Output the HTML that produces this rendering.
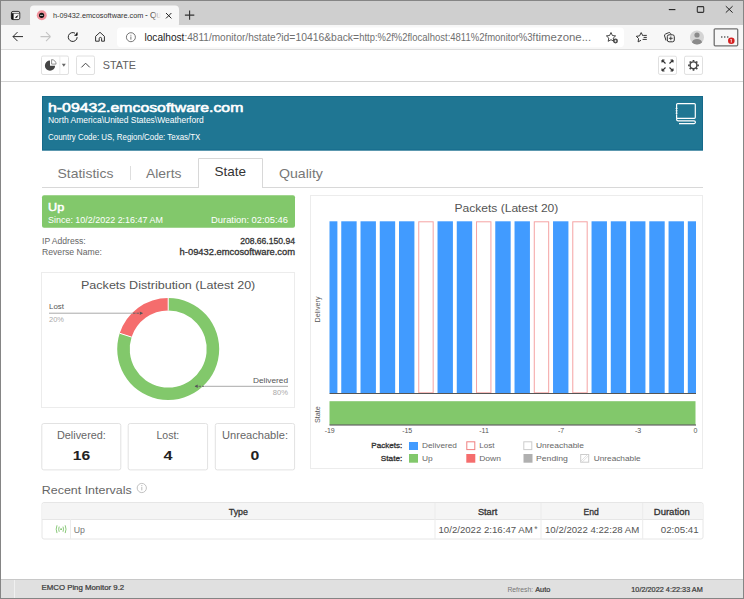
<!DOCTYPE html>
<html><head><meta charset="utf-8">
<style>
html,body{margin:0;padding:0;width:744px;height:599px;overflow:hidden;background:#fff;}
svg{display:block;position:absolute;left:0;top:0;}
text{font-family:"Liberation Sans",sans-serif;}
</style></head>
<body>
<svg width="744" height="599" viewBox="0 0 744 599">
<!-- ===== browser tab strip ===== -->
<rect x="0" y="0" width="744" height="26" fill="#cfcfcf"/>
<rect x="30" y="5.6" width="149" height="22" rx="4" fill="#f7f7f7"/>
<!-- toolbar -->
<rect x="0" y="25" width="744" height="24.5" fill="#f7f7f7"/>
<rect x="0" y="49" width="744" height="1" fill="#dcdcdc"/>
<!-- sidebar icon -->
<rect x="11.4" y="11.4" width="8.4" height="8.2" rx="1.6" fill="#f4f4f4" stroke="#222" stroke-width="0.9"/>
<rect x="11.5" y="12.9" width="8.2" height="0.7" fill="#333"/>
<rect x="11.4" y="13.4" width="2.2" height="6" fill="#111"/>
<path d="M15.6 17.6 L16.6 16.2 L17.4 17 Z M16.5 16.8 L18.3 15.3" stroke="#222" stroke-width="0.9" fill="#222"/>
<!-- favicon -->
<circle cx="41.75" cy="15.2" r="5" fill="#f2929c"/>
<circle cx="41.6" cy="15.35" r="2.6" fill="#111"/>
<rect x="40" y="14.85" width="3.1" height="0.9" fill="#ddd"/>
<!-- tab title -->
<text transform="translate(53.00,18.00) scale(0.905,1)" font-size="8.1" fill="#333">h-09432.emcosoftware.com</text><text x="145" y="18" font-size="8.3" fill="#333">- Qu</text>
<rect x="150" y="9" width="11" height="12" fill="url(#fadeTab)"/><rect x="161" y="9" width="4" height="12" fill="#f7f7f7"/>
<defs>
<linearGradient id="fadeTab" x1="0" x2="1"><stop offset="0" stop-color="#f7f7f7" stop-opacity="0"/><stop offset="1" stop-color="#f7f7f7" stop-opacity="1"/></linearGradient>
</defs>
<path d="M166 13 l5.4 5.4 M171.4 13 l-5.4 5.4" stroke="#222" stroke-width="1"/>
<path d="M189.6 10.4 v9.4 M184.9 15.1 h9.4" stroke="#333" stroke-width="1.1"/>
<!-- window controls -->
<path d="M668.8 9.6 h6.6" stroke="#222" stroke-width="1.1"/>
<rect x="697.3" y="6.6" width="6.4" height="5.8" rx="0.8" fill="none" stroke="#333" stroke-width="1.1"/>
<path d="M725.8 6.2 l6.8 6.4 M732.6 6.2 l-6.8 6.4" stroke="#222" stroke-width="1"/>

<!-- toolbar icons -->
<path d="M13 36.6 h10 M13 36.6 l4.5 -4.5 M13 36.6 l4.5 4.5" stroke="#2a2a2a" stroke-width="1" fill="none"/>
<path d="M50.5 36.6 h-10 M50.5 36.6 l-4.5 -4.5 M50.5 36.6 l-4.5 4.5" stroke="#c4c4c4" stroke-width="1.1" fill="none"/>
<path d="M77.15 37.1 A4.45 4.45 0 1 1 75 33.2" stroke="#2a2a2a" stroke-width="1" fill="none"/>
<path d="M77 32.4 V35.3 H74.3" stroke="#2a2a2a" stroke-width="0.9" fill="none"/><path d="M77.3 32.3 L77.3 35.4 L74.8 35.4 Z" fill="#111"/>
<path d="M95.6 41.2 V36.3 L100 32.3 L104.4 36.3 V41.2 H101.6 V38.6 a1.2 1.2 0 0 0 -2.4 0 V41.2 Z" stroke="#333" stroke-width="1" fill="none" stroke-linejoin="round"/>
<!-- address bar -->
<rect x="117" y="27.5" width="507" height="19.7" rx="4" fill="#fff"/>
<circle cx="130.9" cy="37.2" r="4.5" fill="none" stroke="#666" stroke-width="0.9"/>
<rect x="130.45" y="36.5" width="0.9" height="3.1" fill="#666"/>
<rect x="130.45" y="34.8" width="0.9" height="0.9" fill="#666"/>
<text transform="translate(144.50,41.30) scale(0.954,1)" font-size="10.6" fill="#1a1a1a">localhost</text><text transform="translate(184.40,41.30) scale(0.953,1)" font-size="10.6" fill="#707070">:4811/monitor/hstate?</text><text transform="translate(281.30,41.30) scale(0.979,1)" font-size="10.6" fill="#707070">id=10416&amp;back=</text><text transform="translate(359.20,41.30) scale(0.891,1)" font-size="10.6" fill="#707070">http:%2f%2f</text><text transform="translate(410.10,41.30) scale(0.899,1)" font-size="10.6" fill="#707070">localhost:4811%2fmonitor%3f</text><text transform="translate(535.40,41.30) scale(1.077,1)" font-size="10.6" fill="#707070">timezone...</text>
<!-- star add -->
<path d="M611 32.5 l1.4 3 3.2 .4 -2.4 2.2 .6 3.2 -2.8 -1.6 -2.8 1.6 .6 -3.2 -2.4 -2.2 3.2 -.4z" fill="none" stroke="#333" stroke-width="0.9" stroke-linejoin="round"/>
<circle cx="615.5" cy="41" r="2.4" fill="#444"/>
<path d="M615.5 39.8 v2.4 M614.3 41 h2.4" stroke="#fff" stroke-width="0.7"/>
<!-- favorites -->
<path d="M642.9 35.9 L641.2 32.6 L639.5 35.9 L636.3 36.3 L638.6 38.6 L638.1 41.9 L641 40.3" fill="none" stroke="#333" stroke-width="1" stroke-linejoin="round"/>
<path d="M643.2 35.4 h3.6 M643.6 37.4 h3.2 M642.6 39.4 h4.2" stroke="#333" stroke-width="1"/>
<!-- collections -->
<path d="M666 40.5 L664.6 36 a1.6 1.6 0 0 1 1 -2 l3 -1.3 a1.6 1.6 0 0 1 2 .8 l0.5 1" fill="none" stroke="#333" stroke-width="1"/>
<rect x="667.3" y="34.8" width="7" height="7" rx="1.8" fill="#f7f7f7" stroke="#333" stroke-width="1"/>
<path d="M670.8 36.4 v3.8 M668.9 38.3 h3.8" stroke="#333" stroke-width="0.9"/>
<!-- profile -->
<circle cx="697" cy="37.5" r="7" fill="#d4d4d4"/>
<circle cx="697" cy="35" r="2.6" fill="#8a8a8a"/>
<path d="M692 42.5 a5 3.6 0 0 1 10 0 a7 7 0 0 1 -10 0z" fill="#8a8a8a"/>
<!-- menu -->
<rect x="714.2" y="28.8" width="23.5" height="17" rx="1" fill="none" stroke="#707070" stroke-width="1.3"/>
<circle cx="721.8" cy="37" r="0.7" fill="#222"/><circle cx="724.8" cy="37" r="0.7" fill="#222"/><circle cx="727.8" cy="37" r="0.7" fill="#222"/>
<circle cx="731.3" cy="40.8" r="3.3" fill="#d42020"/>
<path d="M731.3 39.2 v3.4 M730.4 40 l0.9 -0.9" stroke="#fff" stroke-width="0.8"/>

<!-- ===== app toolbar ===== -->
<rect x="0" y="81" width="744" height="1" fill="#d4d4d4"/>
<rect x="41.5" y="56" width="27" height="18.5" rx="1.5" fill="#fff" stroke="#e0e0e0" stroke-width="1"/>
<rect x="59.5" y="56" width="0.8" height="18.5" fill="#e6e6e6"/>
<path d="M50 60.6 A5.1 5.1 0 1 0 55.1 65.7 H50 Z" fill="#444"/>
<path d="M51.6 59.6 v4.5 h4.5 a4.5 4.5 0 0 0 -4.5 -4.5z" fill="none" stroke="#666" stroke-width="0.7"/>
<path d="M61.8 63.8 h4 l-2 3z" fill="#666"/>
<rect x="76.5" y="56" width="18" height="18.5" rx="1.5" fill="#fff" stroke="#e0e0e0" stroke-width="1"/>
<path d="M81.4 67.4 l4.2 -4.2 l4.2 4.2" fill="none" stroke="#444" stroke-width="1"/>
<text transform="translate(102.80,69.20) scale(0.931,1)" font-size="11.6" fill="#606060">STATE</text>
<rect x="658.5" y="56.2" width="18" height="18.2" rx="1.5" fill="#fff" stroke="#e0e0e0" stroke-width="1"/>
<g stroke="#333" stroke-width="1.1" fill="none">
<path d="M662 60 l3.5 3.5 M662 60 h2.5 M662 60 v2.5"/>
<path d="M673 60 l-3.5 3.5 M673 60 h-2.5 M673 60 v2.5"/>
<path d="M662 71 l3.5 -3.5 M662 71 h2.5 M662 71 v-2.5"/>
<path d="M673 71 l-3.5 -3.5 M673 71 h-2.5 M673 71 v-2.5"/>
</g>
<rect x="684.5" y="56.2" width="18" height="18.2" rx="1.5" fill="#fff" stroke="#e0e0e0" stroke-width="1"/>
<g transform="translate(693.5,65.3)">
<circle r="3.4" fill="none" stroke="#444" stroke-width="1.4"/>
<g stroke="#444" stroke-width="1.7">
<path d="M0 -5.4 v1.6 M0 5.4 v-1.6 M-5.4 0 h1.6 M5.4 0 h-1.6 M-3.8 -3.8 l1.1 1.1 M3.8 3.8 l-1.1 -1.1 M-3.8 3.8 l1.1 -1.1 M3.8 -3.8 l-1.1 1.1"/>
</g>
</g>

<!-- ===== header ===== -->
<rect x="42" y="96" width="661" height="54.4" fill="#1f7693"/>
<rect x="42.5" y="96.5" width="660" height="53.5" fill="none" stroke="#15698a" stroke-width="1"/>
<text transform="translate(48.00,112.40) scale(1.165,1)" font-size="13.6" fill="#fff" stroke="#fff" stroke-width="0.6">h-09432.emcosoftware.com</text>
<text transform="translate(48.00,123.20) scale(1.023,1)" font-size="8.3" fill="#fff">North America\United States\Weatherford</text>
<text transform="translate(48.00,139.70) scale(0.957,1)" font-size="8.3" fill="#fff">Country Code: US, Region/Code: Texas/TX</text>
<g stroke="#fff" stroke-width="1.2" fill="none">
<path d="M676.6 118.3 V104.6 a1 1 0 0 1 1 -1 H694.3 a1 1 0 0 1 1 1 V117.3 a1 1 0 0 1 -1 1 H676.6"/>
<path d="M676.6 118.3 V119.2 a1.6 1.6 0 0 0 1.6 1.6 H694 a1.4 1.4 0 0 1 0 2.8 H679"/>
</g>
<rect x="675.3" y="108" width="2.6" height="6.6" fill="#1f7592"/>
<path d="M675.6 108.4 h2 M675.6 110.8 h2 M675.6 113.2 h2" stroke="#fff" stroke-width="0.9"/>
<path d="M676.6 108 v6.6" stroke="#fff" stroke-width="1"/>
<!-- ===== tabs ===== -->
<rect x="42" y="187" width="661" height="1" fill="#d8d8d8"/>
<path d="M198.5 188 V158.5 H262.5 V188" fill="#fff" stroke="#d8d8d8" stroke-width="1"/>
<rect x="199" y="186.5" width="63" height="2" fill="#fff"/>
<rect x="130" y="166" width="1" height="14" fill="#dedede"/>
<text transform="translate(57.50,178.00) scale(1.075,1)" font-size="13" fill="#777">Statistics</text>
<text transform="translate(146.00,178.00) scale(1.071,1)" font-size="13" fill="#777">Alerts</text>
<text transform="translate(214.40,176.20) scale(1.041,1)" font-size="13" fill="#333">State</text>
<text transform="translate(279.00,178.00) scale(1.087,1)" font-size="13" fill="#777">Quality</text>

<!-- ===== green status ===== -->
<rect x="42" y="195.3" width="253" height="32.5" rx="2" fill="#82c86b"/>
<text transform="translate(48.00,210.90) scale(1.112,1)" font-size="11.4" fill="#fff" stroke="#fff" stroke-width="0.5">Up</text>
<text transform="translate(48.00,222.90) scale(0.985,1)" font-size="9.1" fill="#fff">Since: 10/2/2022 2:16:47 AM</text>
<text transform="translate(288.00,222.90) scale(1.029,1)" font-size="9.1" fill="#fff" text-anchor="end">Duration: 02:05:46</text>
<text transform="translate(42.00,244.20) scale(0.955,1)" font-size="9" fill="#666">IP Address:</text>
<text transform="translate(42.00,255.00) scale(0.960,1)" font-size="9" fill="#666">Reverse Name:</text>
<text transform="translate(295.00,244.20) scale(0.955,1)" font-size="9" fill="#333" stroke="#333" stroke-width="0.3" text-anchor="end">208.66.150.94</text>
<text transform="translate(295.00,255.00) scale(1.040,1)" font-size="9" fill="#333" stroke="#333" stroke-width="0.3" text-anchor="end">h-09432.emcosoftware.com</text>

<!-- ===== pie panel ===== -->
<rect x="41.5" y="272.5" width="253" height="135" fill="#fff" stroke="#ececec" stroke-width="1"/>
<text transform="translate(81.00,288.80) scale(1.082,1)" font-size="11.6" fill="#555">Packets Distribution (Latest 20)</text>
<g transform="translate(168.2,349)">
<path d="M0 -51 A51 51 0 1 1 -48.5 -15.76 L-36.6 -11.9 A38.5 38.5 0 1 0 0 -38.5 Z" fill="#82c86b"/>
<path d="M0 -51 A51 51 0 0 0 -48.5 -15.76 L-36.6 -11.9 A38.5 38.5 0 0 1 0 -38.5 Z" fill="#f56d6d"/>
<path d="M0 -51 V-38.5 M-48.5 -15.76 L-36.6 -11.9" stroke="#fff" stroke-width="1"/>
</g>
<rect x="49" y="312.7" width="84" height="1" fill="#aaa"/><path d="M133 313.2 h9.5" stroke="#666" stroke-width="1" stroke-dasharray="2.5 1"/><path d="M139.8 311.5 l3 1.7 -3 1.7z" fill="#555"/>
<rect x="205" y="385.8" width="83" height="1" fill="#aaa"/><path d="M195 386.3 h10" stroke="#666" stroke-width="1" stroke-dasharray="2.5 1"/><path d="M197.7 384.6 l-3 1.7 3 1.7z" fill="#555"/>
<text transform="translate(49.00,309.20) scale(1.017,1)" font-size="7.8" fill="#555">Lost</text>
<text transform="translate(49.00,321.60) scale(0.961,1)" font-size="7.8" fill="#aaa">20%</text>
<text transform="translate(288.00,382.70) scale(1.063,1)" font-size="7.8" fill="#555" text-anchor="end">Delivered</text>
<text transform="translate(288.00,394.80) scale(0.974,1)" font-size="7.8" fill="#aaa" text-anchor="end">80%</text>

<!-- ===== counters ===== -->
<rect x="41.8" y="423.5" width="79" height="46.4" rx="2" fill="#fff" stroke="#e2e2e2" stroke-width="1"/>
<rect x="128.2" y="423.5" width="79.4" height="46.4" rx="2" fill="#fff" stroke="#e2e2e2" stroke-width="1"/>
<rect x="215.3" y="423.5" width="79.3" height="46.4" rx="2" fill="#fff" stroke="#e2e2e2" stroke-width="1"/>
<text transform="translate(81.40,438.90) scale(1.036,1)" font-size="10.5" fill="#666" text-anchor="middle">Delivered:</text>
<text x="167.9" y="438.9" font-size="10.5" fill="#666" text-anchor="middle">Lost:</text>
<text transform="translate(255.00,438.90) scale(1.057,1)" font-size="10.5" fill="#666" text-anchor="middle">Unreachable:</text>
<text transform="translate(81.60,459.70) scale(1.164,1)" font-size="13.5" font-weight="700" fill="#222" text-anchor="middle">16</text>
<text transform="translate(167.90,459.70) scale(1.198,1)" font-size="13.5" font-weight="700" fill="#222" text-anchor="middle">4</text>
<text transform="translate(255.00,459.70) scale(1.171,1)" font-size="13.5" font-weight="700" fill="#222" text-anchor="middle">0</text>

<!-- ===== recent intervals ===== -->
<text transform="translate(41.80,493.70) scale(1.074,1)" font-size="11.6" fill="#666">Recent Intervals</text>
<circle cx="141.8" cy="488" r="4.6" fill="none" stroke="#bbb" stroke-width="0.9"/>
<rect x="141.3" y="486.8" width="1" height="3.6" fill="#bbb"/>
<rect x="141.3" y="485" width="1" height="1" fill="#bbb"/>
<!-- table -->
<rect x="42" y="502.5" width="661" height="36.5" rx="2" fill="#fff" stroke="#e6e6e6" stroke-width="1"/>
<path d="M42.5 519 V505 a2 2 0 0 1 2 -2 H700.5 a2 2 0 0 1 2 2 V519 Z" fill="#f5f5f5"/>
<rect x="42" y="519" width="661" height="1" fill="#e6e6e6"/>
<rect x="70" y="519" width="1" height="20" fill="#ececec"/>
<rect x="434.5" y="503" width="1" height="36" fill="#ececec"/>
<rect x="540.5" y="503" width="1" height="36" fill="#ececec"/>
<rect x="642.2" y="503" width="1" height="36" fill="#ececec"/>
<text x="238.3" y="514.5" font-size="8.8" fill="#333" stroke="#333" stroke-width="0.3" text-anchor="middle">Type</text>
<text transform="translate(477.90,514.50) scale(1.050,1)" font-size="8.8" fill="#333" stroke="#333" stroke-width="0.3">Start</text>
<text transform="translate(583.60,514.50) scale(0.977,1)" font-size="8.8" fill="#333" stroke="#333" stroke-width="0.3">End</text>
<text transform="translate(653.80,514.50) scale(1.082,1)" font-size="8.8" fill="#333" stroke="#333" stroke-width="0.3">Duration</text>
<g fill="none" stroke="#7dc36b" stroke-width="0.9">
<path d="M57 525.3 Q55.4 529.2 57 533.1 M65.2 525.3 Q66.8 529.2 65.2 533.1"/>
<path d="M59.2 526.6 Q58.2 529.2 59.2 531.8 M63 526.6 Q64 529.2 63 531.8"/>
</g><circle cx="61.1" cy="529.2" r="0.9" fill="#7dc36b"/>
<text transform="translate(73.70,532.70) scale(1.045,1)" font-size="8.4" fill="#777">Up</text>
<text transform="translate(438.50,533.00) scale(1.070,1)" font-size="9" fill="#555">10/2/2022 2:16:47 AM</text>
<text x="534.2" y="531.8" font-size="8.5" fill="#666">*</text>
<text transform="translate(545.00,533.00) scale(1.070,1)" font-size="9" fill="#555">10/2/2022 4:22:28 AM</text>
<text transform="translate(698.70,533.00) scale(1.084,1)" font-size="9" fill="#555" text-anchor="end">02:05:41</text>

<!-- ===== chart panel ===== -->
<rect x="310.5" y="195.5" width="392" height="273" fill="#fff" stroke="#ececec" stroke-width="1"/>
<text transform="translate(454.40,211.60) scale(1.041,1)" font-size="11.6" fill="#555">Packets (Latest 20)</text>
<defs><clipPath id="plot"><rect x="329.5" y="200" width="366.5" height="230"/></clipPath></defs>
<g clip-path="url(#plot)"><rect x="322.00" y="221.3" width="15.40" height="171.7" fill="#419bff"/><rect x="341.25" y="221.3" width="15.40" height="171.7" fill="#419bff"/><rect x="360.51" y="221.3" width="15.40" height="171.7" fill="#419bff"/><rect x="379.76" y="221.3" width="15.40" height="171.7" fill="#419bff"/><rect x="399.01" y="221.3" width="15.40" height="171.7" fill="#419bff"/><rect x="418.76" y="221.8" width="14.40" height="171" fill="#fff" stroke="#f5a3a3" stroke-width="1"/><rect x="437.52" y="221.3" width="15.40" height="171.7" fill="#419bff"/><rect x="456.77" y="221.3" width="15.40" height="171.7" fill="#419bff"/><rect x="476.52" y="221.8" width="14.40" height="171" fill="#fff" stroke="#f5a3a3" stroke-width="1"/><rect x="495.27" y="221.3" width="15.40" height="171.7" fill="#419bff"/><rect x="514.53" y="221.3" width="15.40" height="171.7" fill="#419bff"/><rect x="534.28" y="221.8" width="14.40" height="171" fill="#fff" stroke="#f5a3a3" stroke-width="1"/><rect x="553.03" y="221.3" width="15.40" height="171.7" fill="#419bff"/><rect x="572.78" y="221.8" width="14.40" height="171" fill="#fff" stroke="#f5a3a3" stroke-width="1"/><rect x="591.54" y="221.3" width="15.40" height="171.7" fill="#419bff"/><rect x="610.79" y="221.3" width="15.40" height="171.7" fill="#419bff"/><rect x="630.04" y="221.3" width="15.40" height="171.7" fill="#419bff"/><rect x="649.29" y="221.3" width="15.40" height="171.7" fill="#419bff"/><rect x="668.55" y="221.3" width="15.40" height="171.7" fill="#419bff"/><rect x="687.80" y="221.3" width="15.40" height="171.7" fill="#419bff"/></g>
<rect x="329.5" y="393" width="366.5" height="1" fill="#555"/>
<rect x="329.5" y="401.2" width="366" height="23.6" fill="#82c86b"/>
<rect x="329.5" y="424.5" width="366.5" height="1" fill="#444"/>
<text transform="translate(320.3,309.5) rotate(-90)" font-size="7.2" fill="#555" text-anchor="middle">Delivery</text>
<text transform="translate(320.3,414.6) rotate(-90)" font-size="7.2" fill="#555" text-anchor="middle">State</text>
<g font-size="7" fill="#555" text-anchor="middle">
<text x="329.7" y="433.3">-19</text>
<text x="407.2" y="433.3">-15</text>
<text x="484" y="433.3">-11</text>
<text x="561" y="433.3">-7</text>
<text x="638" y="433.3">-3</text>
<text x="695.5" y="433.3">0</text>
</g>
<text transform="translate(402.30,448.20) scale(1.037,1)" font-size="7.8" fill="#333" stroke="#333" stroke-width="0.3" text-anchor="end">Packets:</text>
<text transform="translate(402.30,460.70) scale(1.055,1)" font-size="7.8" fill="#333" stroke="#333" stroke-width="0.3" text-anchor="end">State:</text>
<rect x="409" y="442" width="9" height="8" fill="#419bff"/>
<rect x="466.8" y="441.8" width="8" height="7.8" fill="#fff" stroke="#f08080" stroke-width="1"/>
<rect x="523.8" y="441.8" width="8" height="7.8" fill="#fff" stroke="#ccc" stroke-width="1"/>
<rect x="409" y="454" width="9" height="8.7" fill="#82c86b"/>
<rect x="466.3" y="454" width="9" height="8.7" fill="#f56d6d"/>
<rect x="523.5" y="454" width="9" height="8.7" fill="#b0b0b0"/>
<rect x="580.7" y="454.5" width="8" height="7.7" fill="#fff" stroke="#ccc" stroke-width="1"/>
<path d="M581 461 l6.8 -6.8 M582 462.2 l6.8 -6.8" stroke="#d4d4d4" stroke-width="0.7"/>
<g font-size="7.8" fill="#666">
<text transform="translate(422.00,448.10) scale(1.063,1)">Delivered</text>
<text transform="translate(479.20,448.10) scale(1.037,1)">Lost</text>
<text transform="translate(536.00,448.10) scale(1.086,1)">Unreachable</text>
<text transform="translate(422.00,460.60) scale(1.073,1)">Up</text>
<text transform="translate(479.20,460.60) scale(1.093,1)">Down</text>
<text transform="translate(536.00,460.60) scale(1.111,1)">Pending</text>
<text transform="translate(593.70,460.60) scale(1.063,1)">Unreachable</text>
</g>

<!-- ===== status bar ===== -->
<rect x="0" y="579" width="744" height="20" fill="#e0e0e0"/>
<rect x="0" y="579" width="744" height="1" fill="#c8c8c8"/>
<rect x="14" y="580" width="1" height="18" fill="#f0f0f0"/>
<text transform="translate(41.50,589.70) scale(1.060,1)" font-size="7.4" fill="#3a3a3a" stroke="#3a3a3a" stroke-width="0.22">EMCO Ping Monitor 9.2</text>
<text transform="translate(507.40,591.50) scale(1.035,1)" font-size="6.6" fill="#777">Refresh:</text><text transform="translate(535.20,591.50) scale(1.064,1)" font-size="6.9" fill="#3a3a3a" stroke="#3a3a3a" stroke-width="0.22">Auto</text>
<text transform="translate(631.30,591.50) scale(1.016,1)" font-size="7.2" fill="#3a3a3a" stroke="#3a3a3a" stroke-width="0.22">10/2/2022 4:22:33 AM</text>

<!-- ===== frame ===== -->
<rect x="0.5" y="0.5" width="743" height="598" fill="none" stroke="#858585" stroke-width="1"/>
</svg>
</body></html>
